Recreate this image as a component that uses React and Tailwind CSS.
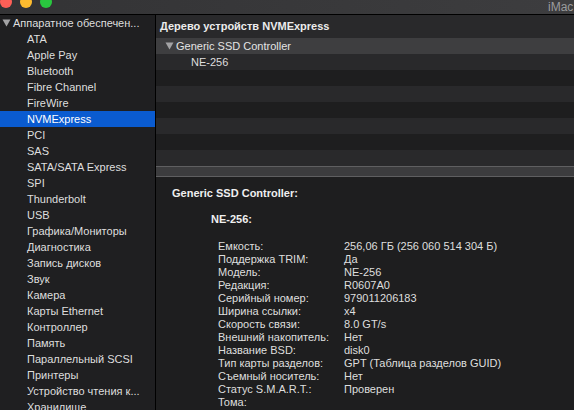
import React from 'react'

const sidebarItems = [
    'ATA',
    'Apple Pay',
    'Bluetooth',
    'Fibre Channel',
    'FireWire',
    'NVMExpress',
    'PCI',
    'SAS',
    'SATA/SATA Express',
    'SPI',
    'Thunderbolt',
    'USB',
    'Графика/Мониторы',
    'Диагностика',
    'Запись дисков',
    'Звук',
    'Камера',
    'Карты Ethernet',
    'Контроллер',
    'Память',
    'Параллельный SCSI',
    'Принтеры',
    'Устройство чтения к...',
    'Хранилище',
]

const props = [
    ['Емкость:', '256,06 ГБ (256 060 514 304 Б)'],
    ['Поддержка TRIM:', 'Да'],
    ['Модель:', 'NE-256'],
    ['Редакция:', 'R0607A0'],
    ['Серийный номер:', '979011206183'],
    ['Ширина ссылки:', 'x4'],
    ['Скорость связи:', '8.0 GT/s'],
    ['Внешний накопитель:', 'Нет'],
    ['Название BSD:', 'disk0'],
    ['Тип карты разделов:', 'GPT (Таблица разделов GUID)'],
    ['Съемный носитель:', 'Нет'],
    ['Статус S.M.A.R.T.:', 'Проверен'],
    ['Тома:', ''],
]

function Triangle() {
    return (
        <svg width="9" height="8" viewBox="0 0 9 8" className="shrink-0">
            <path d="M0.5 0.5 L8.5 0.5 L4.5 7.5 Z" fill="#a3a3a5" />
        </svg>
    )
}

export default function App() {
    return (
        <div className="w-[574px] h-[410px] overflow-hidden flex flex-col bg-[#1e1e1f] text-[11px] text-[#dedede] font-['Liberation_Sans',Arial,sans-serif]">
            {/* title bar */}
            <div className="relative h-[15px] shrink-0 bg-gradient-to-r from-[#333335] to-[#3d3d3f] border-b border-black">
                <div className="absolute left-0 top-[-4px] flex gap-[8px]">
                    <span className="w-[12px] h-[12px] rounded-full bg-[#fd5f57]" />
                    <span className="w-[12px] h-[12px] rounded-full bg-[#fdbb2f]" />
                    <span className="w-[12px] h-[12px] rounded-full bg-[#29c73f]" />
                </div>
                <div className="absolute left-[548px] top-[-2px] text-[12px] text-[#9b9b9d] whitespace-nowrap">iMac</div>
            </div>

            <div className="flex flex-1 min-h-0">
                {/* sidebar */}
                <div className="w-[156px] shrink-0 bg-[#1f1f21] border-r border-black overflow-hidden">
                    <div className="h-[16px] flex items-center gap-[2px] pl-[2px] whitespace-nowrap">
                        <Triangle />
                        <span>Аппаратное обеспечен...</span>
                    </div>
                    {sidebarItems.map((item) => (
                        <div
                            key={item}
                            className={`h-[16px] leading-[16px] pl-[27px] whitespace-nowrap ${
                                item === 'NVMExpress' ? 'bg-[#0a5bd0] text-white' : ''
                            }`}
                        >
                            {item}
                        </div>
                    ))}
                </div>

                {/* main */}
                <div className="flex-1 flex flex-col min-w-0">
                    <div className="h-[23px] shrink-0 flex items-center pl-[4px] bg-[#29292b] font-bold text-[#ececec]">
                        Дерево устройств NVMExpress
                    </div>
                    <div className="h-[16px] flex items-center gap-[2px] pl-[9px] bg-[#3e3e40] text-[#e4e4e4]">
                        <Triangle />
                        <span>Generic SSD Controller</span>
                    </div>
                    <div className="h-[16px] leading-[16px] pl-[35px] bg-[#29292b]">NE-256</div>
                    <div className="h-[16px] bg-[#1e1e1f]" />
                    <div className="h-[16px] bg-[#29292b]" />
                    <div className="h-[16px] bg-[#1e1e1f]" />
                    <div className="h-[16px] bg-[#29292b]" />
                    <div className="h-[16px] bg-[#1e1e1f]" />
                    <div className="h-[16px] bg-[#29292b]" />

                    {/* splitter */}
                    <div className="h-[11px] shrink-0 bg-[#3c3c3e] border-y border-[#5f5f61]" />

                    {/* details */}
                    <div className="flex-1 bg-[#1e1e1f] pt-[10px] pl-[16px] leading-[13px]">
                        <div className="font-bold text-[#efefef]">Generic SSD Controller:</div>
                        <div className="font-bold text-[#efefef] mt-[13px] pl-[39px]">NE-256:</div>
                        <div className="mt-[14px] pl-[46px]">
                            {props.map(([label, value]) => (
                                <div key={label} className="flex h-[13px] whitespace-nowrap">
                                    <span className="w-[126px] shrink-0">{label}</span>
                                    <span>{value}</span>
                                </div>
                            ))}
                        </div>
                    </div>
                </div>
            </div>
        </div>
    )
}
